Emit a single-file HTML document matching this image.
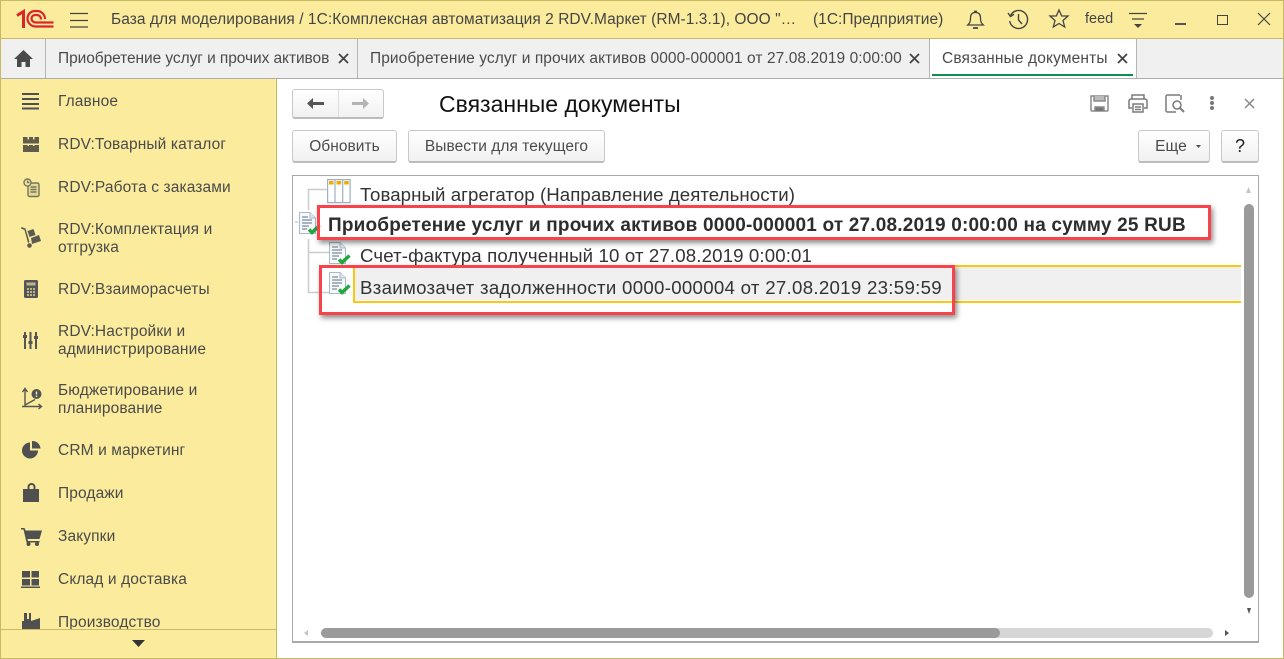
<!DOCTYPE html>
<html lang="ru"><head><meta charset="utf-8"><title>Связанные документы</title>
<style>
*{box-sizing:border-box}
html,body{margin:0;padding:0;width:1284px;height:659px;overflow:hidden;background:#fff}
body{position:relative;font-family:"Liberation Sans",sans-serif;font-size:15.5px;color:#4b4b4b}
.a{position:absolute}
.t{position:absolute;white-space:nowrap;line-height:18px}
.btn{position:absolute;height:33px;border:1px solid #c8c8c8;border-bottom:2px solid #bbb;border-radius:3px;background:linear-gradient(#fff,#f1f1f1);text-align:center;line-height:31px;color:#4b4b4b;white-space:nowrap;letter-spacing:.05px}
.r{position:absolute;border:3px solid #f6444a;box-shadow:2px 3px 5px rgba(0,0,0,.45)}
svg{position:absolute;overflow:visible}
.m{color:#4a4a4a;letter-spacing:.12px}
.g{font-size:18.67px;color:#333}
</style></head><body>
<!-- top bar -->
<div class="a" style="left:0;top:0;width:1284px;height:39px;background:#fbec9d;border:1px solid #c8b964"></div>
<svg style="left:17px;top:10px" width="37" height="19" viewBox="0 0 37 19" fill="none" stroke="#dc252b" stroke-width="2.200"><path d="M0 5.500L6.500 1.500V18" stroke-width="3"/><path d="M36.500 16.500H18.500a8 8 0 0 1-8-8a7.500 7.500 0 0 1 7.500-7.500H20a8 8 0 0 1 8 8"/><path d="M36.500 12.500H18.500a4 4 0 0 1-4-4a3.500 3.500 0 0 1 3.500-3.500H20a4 4 0 0 1 4 4v.5"/></svg>
<svg style="left:70px;top:13px" width="18" height="15" stroke="#444" stroke-width="1.200"><path d="M0 .5H18M0 7.500H18M0 14H18"/></svg>
<div class="t" style="left:111px;top:11px;color:#444;letter-spacing:.05px">База для моделирования / 1С:Комплексная автоматизация 2 RDV.Маркет (RM-1.3.1), ООО "…</div>
<div class="t" style="left:813px;top:11px;color:#444;letter-spacing:.02px">(1С:Предприятие)</div>
<svg style="left:967px;top:10px" width="17" height="19" fill="none" stroke="#444" stroke-width="1.300"><path d="M.7 15c2-2 2.800-3 2.800-7 0-3.500 1.500-5.500 5-5.500s5 2 5 5.500c0 4 .8 5 2.800 7z"/><path d="M7 1.500h3M6 18h5" stroke-width="1.800"/></svg>
<svg style="left:1008px;top:10px" width="20" height="19" fill="none" stroke="#444" stroke-width="1.400"><path d="M2.500 5.500A9 9 0 1 1 1.700 11"/><path d="M0 3l2.500 3.500L6 4.200"/><path d="M10.500 4V10l3.500 4"/></svg>
<svg style="left:1049px;top:9px" width="20" height="20" fill="none" stroke="#444" stroke-width="1.300"><path d="M10 1l2.700 6H19l-5 4.500 1.700 6.500L10 14.500 4.300 18 6 11.500 1 7h6.300z"/></svg>
<div class="t" style="left:1085px;top:10px;font-size:14.5px;color:#444">feed</div>
<svg style="left:1129px;top:13px" width="18" height="16" stroke="#444" stroke-width="1.300"><path d="M0 .5H18M3 6H15"/><path d="M5 11h8l-4 4z" fill="#444" stroke="none"/></svg>
<div class="a" style="left:1175px;top:23px;width:11px;height:1.500px;background:#555"></div>
<div class="a" style="left:1217px;top:15px;width:11px;height:10px;border:1.300px solid #444"></div>
<svg style="left:1258px;top:13px" width="12" height="12" stroke="#444" stroke-width="1.200"><path d="M0 0L12 12M12 0L0 12"/></svg>
<!-- tab bar -->
<div class="a" style="left:0;top:39px;width:1284px;height:40px;background:#f0f0f0;border-bottom:1px solid #adadad;border-left:1px solid #c8b964;border-right:1px solid #c8b964"></div>
<div class="a" style="left:45px;top:39px;width:1px;height:39px;background:#b5b5b5"></div>
<div class="a" style="left:357px;top:39px;width:1px;height:39px;background:#b5b5b5"></div>
<div class="a" style="left:929px;top:39px;width:208px;height:39px;background:#fff;border-left:1px solid #b5b5b5;border-right:1px solid #b5b5b5"></div>
<div class="a" style="left:932px;top:74px;width:201px;height:2px;background:#0e8f4d"></div>
<svg style="left:14px;top:50px" width="19" height="17" fill="#4a4a4a"><path d="M9.500 0L19 9h-3v8h-4.500v-5h-4v5H3V9H0z"/></svg>
<div class="t" style="left:58px;top:50px;letter-spacing:-.07px">Приобретение услуг и прочих активов</div>
<svg style="left:339px;top:54px" width="9" height="9" stroke="#444" stroke-width="1.800"><path d="M0 0L9 9M9 0L0 9"/></svg>
<div class="t" style="left:370px;top:50px;letter-spacing:.07px">Приобретение услуг и прочих активов 0000-000001 от 27.08.2019 0:00:00</div>
<svg style="left:910px;top:54px" width="9" height="9" stroke="#444" stroke-width="1.800"><path d="M0 0L9 9M9 0L0 9"/></svg>
<div class="t" style="left:942px;top:50px;letter-spacing:.15px">Связанные документы</div>
<svg style="left:1118px;top:54px" width="9" height="9" stroke="#444" stroke-width="1.800"><path d="M0 0L9 9M9 0L0 9"/></svg>
<!-- sidebar -->
<div class="a" style="left:0;top:79px;width:277px;height:580px;background:#fbec9d;border-right:1px solid #c8b964;border-left:1px solid #c8b964;border-bottom:1px solid #c8b964"></div>
<svg style="left:22px;top:92px" width="18" height="18" fill="#4f4f4f"><path d="M0 1h17v2H0zM0 6h17v2H0zM0 11h17v2H0zM0 15.500h17v2H0z"/></svg>
<div class="t m" style="left:58px;top:93px">Главное</div>
<svg style="left:23px;top:137px" width="16" height="15" fill="#5f5c4c"><path d="M0 0h4.500v2.500H6V0h4v2.500h1.500V0H16v6.500H0zM0 8h4.500v1H6V8h4v1h1.500V8H16v7H0z"/></svg>
<div class="t m" style="left:58px;top:136px">RDV:Товарный каталог</div>
<svg style="left:23px;top:178px" width="17" height="19" fill="none" stroke="#77745e" stroke-width="1.400"><rect x="5" y="5" width="11" height="13.500" rx="1.500" fill="#e5da93"/><circle cx="4.500" cy="4.500" r="3.500" fill="#fbec9d"/><path d="M4.500 2.500v2h2M7.500 9h6M7.500 11.500h6M7.500 14h6"/></svg>
<div class="t m" style="left:58px;top:179px">RDV:Работа с заказами</div>
<svg style="left:21px;top:227px" width="21" height="21" fill="#5a5a50"><path d="M.5 0L4.500 1.500 8.500 15l-1.500 1L3.500 3 0 1.500z"/><path d="M6.500 4l6-2 2 6-6 2zM10 11l8-3 2 6-9 3z"/><circle cx="8.500" cy="18.500" r="2.300"/></svg>
<div class="t m" style="left:58px;top:221px">RDV:Комплектация и</div>
<div class="t m" style="left:58px;top:239px">отгрузка</div>
<svg style="left:24px;top:280px" width="14" height="18" fill="#555"><rect width="14" height="18" rx="1.500"/><path d="M2.500 2.500h9v3h-9z" fill="#bdb684"/><path d="M3 8h2v2H3zM6 8h2v2H6zM9 8h2v2H9zM3 11h2v2H3zM6 11h2v2H6zM9 11h2v2H9zM3 14h2v2H3zM6 14h2v2H6zM9 14h2v2H9z" fill="#bdb684"/></svg>
<div class="t m" style="left:58px;top:281px">RDV:Взаиморасчеты</div>
<svg style="left:23px;top:332px" width="15" height="17" stroke="#555" stroke-width="2"><path d="M2 0V3M2 6V17M7.500 0V9M7.500 12V17M13 0V4M13 7V17"/><path d="M0 4.500H4M5.500 10.500H9.500M11 5.500H15" stroke-width="3"/></svg>
<div class="t m" style="left:58px;top:323px">RDV:Настройки и</div>
<div class="t m" style="left:58px;top:341px">администрирование</div>
<svg style="left:22px;top:388px" width="20" height="21" fill="none" stroke="#555" stroke-width="1.400"><path d="M3 2V18.500M.5 4L3 .5 5.500 4M0 18.500h19M16.500 16l3 2.500-3 2.500M3 17L13 11.500"/><circle cx="14.500" cy="6" r="5" fill="#555" stroke="none"/><path d="M14.500 3.500v3M14.500 7.500v1.500" stroke="#fbec9d"/></svg>
<div class="t m" style="left:58px;top:382px">Бюджетирование и</div>
<div class="t m" style="left:58px;top:400px">планирование</div>
<svg style="left:22px;top:441px" width="19" height="18" fill="#505050"><path d="M8 1.500a8 8 0 1 0 8 8H8z"/><path d="M10 0a8 8 0 0 1 8.500 7.500H10z"/></svg>
<div class="t m" style="left:58px;top:442px">CRM и маркетинг</div>
<svg style="left:23px;top:483px" width="17" height="19" fill="#505050"><path d="M0 6h4.500V4a4 4 0 0 1 8 0v2H16v13H0zM6.500 6h4V4a2 2 0 0 0-4 0z"/></svg>
<div class="t m" style="left:58px;top:485px">Продажи</div>
<svg style="left:21px;top:528px" width="21" height="18" fill="#505050"><path d="M0 0h3.500l1 2.500H21L18.500 11H6.500l.5 2h11.500v1.500H5.500L2.500 1.500H0z"/><circle cx="7.500" cy="16" r="2"/><circle cx="16" cy="16" r="2"/></svg>
<div class="t m" style="left:58px;top:528px">Закупки</div>
<svg style="left:21px;top:570px" width="19" height="18" fill="#505050"><path d="M1 1h8v6.500H1zM10.500 1h7.500v6.500h-7.500zM1 9h8v6.500H1zM10.500 9h7.500v6.500h-7.500zM0 16.500h19V18H0z"/></svg>
<div class="t m" style="left:58px;top:571px">Склад и доставка</div>
<svg style="left:22px;top:613px" width="18" height="17" fill="#505050"><path d="M2 0h3v6h2V0h2v8l9-3v12H0V8h2z"/></svg>
<div class="t m" style="left:58px;top:614px">Производство</div>
<div class="a" style="left:1px;top:629px;width:275px;height:29px;background:#fbec9d;border-top:1px solid #c8b964"></div>
<svg style="left:132px;top:640px" width="13" height="8" fill="#333"><path d="M0 0h13L6.500 7z"/></svg>
<!-- content right page border -->
<div class="a" style="left:277px;top:658px;width:1007px;height:1px;background:#c8b964"></div>
<div class="a" style="left:1283px;top:79px;width:1px;height:580px;background:#c8b964"></div>
<!-- nav buttons -->
<div class="btn" style="left:292px;top:89px;width:92px;height:30px"></div>
<div class="a" style="left:338px;top:90px;width:1px;height:27px;background:#ddd"></div>
<svg style="left:307px;top:98px" width="17" height="11" fill="#555"><path d="M6 0v4h11v3H6v4L0 5.500z"/></svg>
<svg style="left:352px;top:98px" width="17" height="11" fill="#b4b4b4"><path d="M11 0v4H0v3h11v4l6-5.500z"/></svg>
<div class="t" style="left:439px;top:91px;font-size:23px;line-height:26px;color:#111">Связанные документы</div>
<div class="btn" style="left:292px;top:130px;width:105px">Обновить</div>
<div class="btn" style="left:408px;top:130px;width:197px">Вывести для текущего</div>
<div class="btn" style="left:1138px;top:130px;width:72px;padding-right:6px">Еще</div>
<svg style="left:1196px;top:145px" width="5" height="3" fill="#555"><path d="M0 0h5L2.500 3z"/></svg>
<div class="btn" style="left:1221px;top:130px;width:38px;color:#222;font-size:18px">?</div>
<!-- form icons -->
<svg style="left:1090px;top:95px" width="19" height="17" fill="none" stroke="#8a8a8a" stroke-width="1.500"><path d="M1 1h17v14a1 1 0 0 1-1 1H2a1 1 0 0 1-1-1z"/><path d="M4 1v5h11V1" fill="#bbb"/><path d="M5 16v-4h9v4" fill="#777"/></svg>
<svg style="left:1128px;top:94px" width="20" height="19" fill="none" stroke="#7a7a7a" stroke-width="1.500"><path d="M4 5V1h12v4M4 14H1V7a2 2 0 0 1 2-2h14a2 2 0 0 1 2 2v7h-3"/><path d="M5 10h10v8H5zM7 13h6M7 15.500h6"/></svg>
<svg style="left:1165px;top:94px" width="20" height="19" fill="none" stroke="#7a7a7a" stroke-width="1.500"><path d="M15 1H2.500A1.500 1.500 0 0 0 1 2.500v14A1.500 1.500 0 0 0 2.500 18H11"/><circle cx="12" cy="11" r="4"/><path d="M15 14l4 4" stroke-width="2"/><path d="M16 1v5"/></svg>
<svg style="left:1210px;top:96px" width="4" height="14" fill="#777"><circle cx="2" cy="2" r="2"/><circle cx="2" cy="7" r="2"/><circle cx="2" cy="12" r="2"/></svg>
<svg style="left:1245px;top:99px" width="9" height="9" stroke="#888" stroke-width="1.500"><path d="M0 0L9 9M9 0L0 9"/></svg>
<!-- tree box -->
<div class="a" style="left:292px;top:175px;width:967px;height:468px;border:1px solid #a9a9a9;border-bottom-width:2px;background:#fff"></div>
<svg style="left:295px;top:175px" width="40" height="125" fill="none" stroke="#ccc" stroke-width="1.500"><path d="M13.500 35V14.500H33M0 47H3M13.500 64V117.500H34M13.500 77.500H34"/></svg>
<!-- aggregator icon -->
<svg style="left:327px;top:179px" width="24" height="24" fill="#fff" stroke="#9bb0c2" stroke-width="1.200"><rect x=".6" y=".6" width="22.500" height="23"/><path d="M8 .6V23.500M15.700.6V23.500"/><path d="M2 2h4.500v3.500H2zM9.500 2h4.700v3.500H9.500zM17.200 2h4.500v3.500h-4.500z" fill="#f0ac00" stroke="none"/></svg>
<div class="t g" style="left:360px;top:186px;letter-spacing:.07px">Товарный агрегатор (Направление деятельности)</div>
<!-- selected row -->
<div class="a" style="left:353px;top:265px;width:888px;height:38px;border-top:2px solid #fcc80e;border-bottom:2px solid #fcc80e;border-left:2px solid #fcc80e;background:#fff"></div>
<div class="a" style="left:355px;top:267px;width:886px;height:33px;background:#f0f0f0"></div>
<div class="t g" style="left:360px;top:247px;letter-spacing:.13px">Счет-фактура полученный 10 от 27.08.2019 0:00:01</div>
<div class="t g" style="left:360px;top:279px;letter-spacing:.29px">Взаимозачет задолженности 0000-000004 от 27.08.2019 23:59:59</div>
<div class="t" style="left:328px;top:217px;font-size:19px;font-weight:bold;color:#2d2d2d;letter-spacing:.19px">Приобретение услуг и прочих активов 0000-000001 от 27.08.2019 0:00:00 на сумму 25 RUB</div>
<!-- doc icons -->
<svg style="left:299px;top:212px" width="22" height="23"><path d="M.5.500H11L16.500 6V21.500H.5z" fill="#f6f9fb" stroke="#a9bac8"/><path d="M11 .5V6h5.500" fill="#dfe7ee" stroke="#a9bac8"/><path d="M3 5h6M3 8h10M3 11h10M3 14h7M3 17h5" stroke="#5f6f7c"/><path d="M10 17.500l3 3 7.500-7" fill="none" stroke="#1fa83c" stroke-width="3.400"/></svg>
<svg style="left:329px;top:242px" width="22" height="23"><path d="M.5.500H11L16.500 6V21.500H.5z" fill="#f6f9fb" stroke="#a9bac8"/><path d="M11 .5V6h5.500" fill="#dfe7ee" stroke="#a9bac8"/><path d="M3 5h6M3 8h10M3 11h10M3 14h7M3 17h5" stroke="#5f6f7c"/><path d="M10 17.500l3 3 7.500-7" fill="none" stroke="#1fa83c" stroke-width="3.400"/></svg>
<svg style="left:329px;top:272px" width="22" height="23"><path d="M.5.500H11L16.500 6V21.500H.5z" fill="#f6f9fb" stroke="#a9bac8"/><path d="M11 .5V6h5.500" fill="#dfe7ee" stroke="#a9bac8"/><path d="M3 5h6M3 8h10M3 11h10M3 14h7M3 17h5" stroke="#5f6f7c"/><path d="M10 17.500l3 3 7.500-7" fill="none" stroke="#1fa83c" stroke-width="3.400"/></svg>
<!-- red boxes -->
<div class="r" style="left:317px;top:205px;width:894px;height:35px"></div>
<div class="r" style="left:319px;top:265px;width:636px;height:50px"></div>
<!-- scrollbars -->
<svg style="left:1246px;top:187px" width="5" height="6" fill="#c4c4c4"><path d="M2.500 0L5 6H0z"/></svg>
<div class="a" style="left:1244px;top:204px;width:10px;height:394px;background:#9a9a9a;border-radius:5px"></div>
<svg style="left:1247px;top:608px" width="4" height="6" fill="#555"><path d="M0 0h4L2 6z"/></svg>
<svg style="left:304px;top:630px" width="4" height="6" fill="#c4c4c4"><path d="M4 0v6L0 3z"/></svg>
<div class="a" style="left:321px;top:628px;width:892px;height:10px;background:#d6d6d6;border-radius:5px"></div>
<div class="a" style="left:321px;top:628px;width:679px;height:10px;background:#9a9a9a;border-radius:5px"></div>
<svg style="left:1225px;top:630px" width="4" height="6" fill="#555"><path d="M0 0v6L4 3z"/></svg>
</body></html>
